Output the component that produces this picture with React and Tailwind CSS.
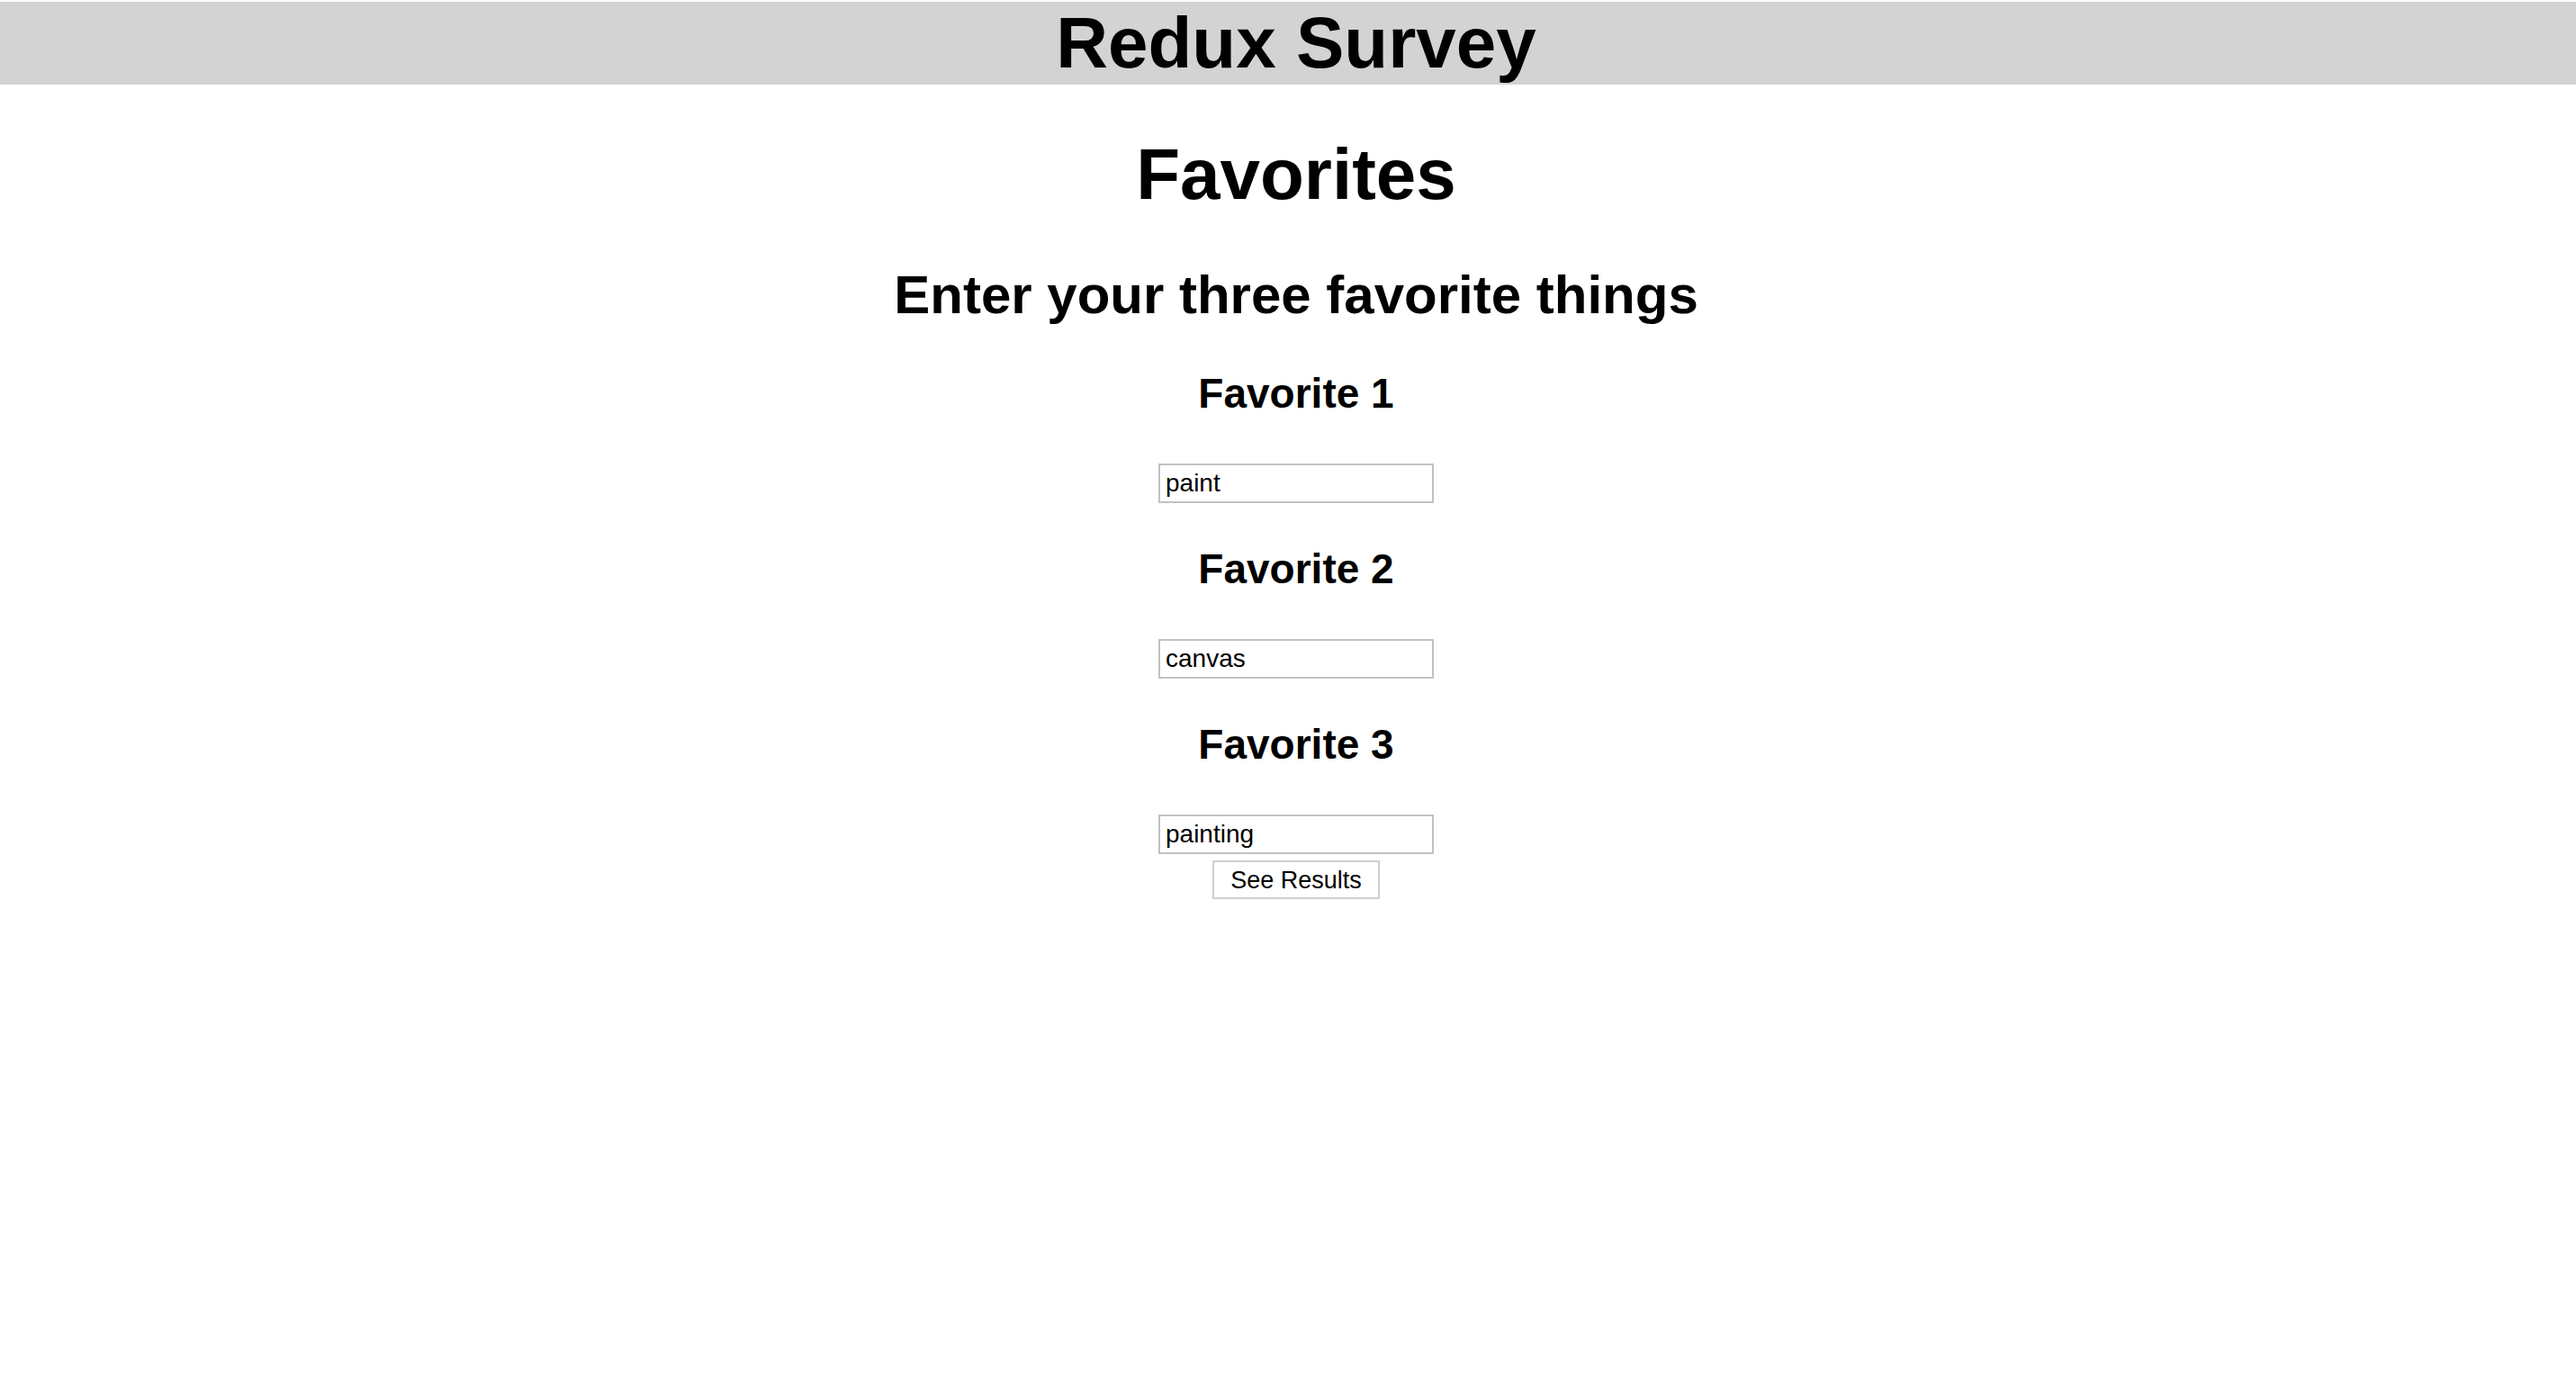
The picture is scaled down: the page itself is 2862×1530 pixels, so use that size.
import React from "react";

const favorites = [
  { label: "Favorite 1", value: "paint", first: true },
  { label: "Favorite 2", value: "canvas" },
  { label: "Favorite 3", value: "painting" },
];

function FavoriteField({ label, value, first }) {
  return (
    <>
      <h3
        className={`${first ? "mt-[56px]" : "mt-[50px]"} text-[46px] leading-[46px] font-bold`}
      >
        {label}
      </h3>
      <input
        type="text"
        defaultValue={value}
        className="mt-[55px] h-[44px] w-[306px] border-[2px] border-[#c2c2c2] bg-white pl-[6px] text-[28px] text-black outline-none"
      />
    </>
  );
}

export default function App() {
  return (
    <div className="min-h-screen bg-white pt-[2px] font-['Liberation_Sans',Arial,sans-serif] text-black">
      <header className="flex h-[92px] justify-center bg-[#d3d3d3] pl-[18px]">
        <h1 className="text-[80px] leading-[92px] font-bold">Redux Survey</h1>
      </header>

      <main className="flex flex-col items-center pl-[18px]">
        <h1 className="mt-[60px] text-[80px] leading-[80px] font-bold">
          Favorites
        </h1>
        <h2 className="mt-[64px] text-[60px] leading-[60px] font-bold">
          Enter your three favorite things
        </h2>

        {favorites.map((f) => (
          <FavoriteField key={f.label} {...f} />
        ))}

        <button
          type="button"
          className="mt-[7px] h-[43px] w-[186px] border-[2px] border-[#cfcfcf] bg-white text-[27px] text-black"
        >
          See Results
        </button>
      </main>
    </div>
  );
}
